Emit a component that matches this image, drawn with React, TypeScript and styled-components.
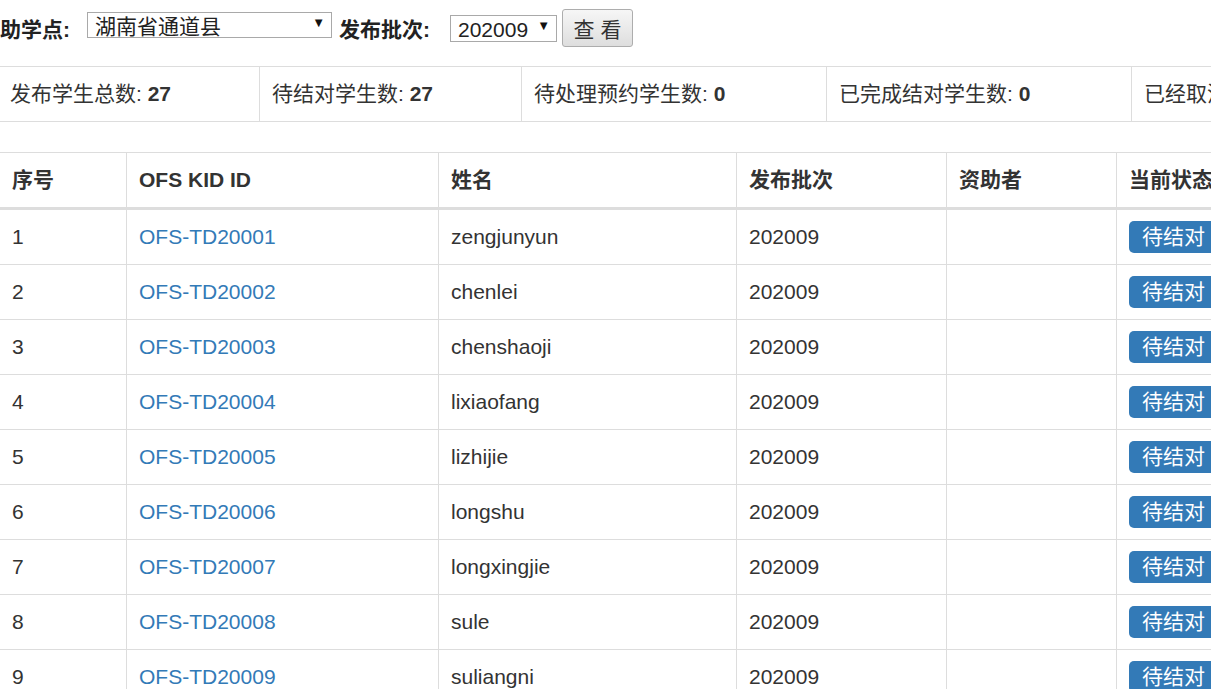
import styled, { createGlobalStyle } from 'styled-components';

const GlobalStyle = createGlobalStyle`
    html, body {
        margin: 0;
        padding: 0;
        background: #fff;
        overflow: hidden;
    }
    body {
        font-family: "Liberation Sans", "Noto Sans CJK SC", sans-serif;
        font-size: 21px;
        color: #333;
    }
`;

const rows = [
    'zengjunyun',
    'chenlei',
    'chenshaoji',
    'lixiaofang',
    'lizhijie',
    'longshu',
    'longxingjie',
    'sule',
    'suliangni',
];

const stats = [
    { label: '发布学生总数', value: '27', width: 262 },
    { label: '待结对学生数', value: '27', width: 262 },
    { label: '待处理预约学生数', value: '0', width: 305 },
    { label: '已完成结对学生数', value: '0', width: 305 },
    { label: '已经取消结对学生数', value: '0', width: 305 },
];

const columns = [
    { title: '序号', width: 127 },
    { title: 'OFS KID ID', width: 312 },
    { title: '姓名', width: 298 },
    { title: '发布批次', width: 210 },
    { title: '资助者', width: 170 },
    { title: '当前状态', width: 200 },
];

const App = () => {
    return (
        <Page>
            <GlobalStyle />
            <FilterBar>
                <FilterLabel>资助学点:</FilterLabel>
                <SelectWrap $width={ 245 } $height={ 26 } $shift={ -6 }>
                    <Select defaultValue='tongdao'>
                        <option value='tongdao'>湖南省通道县</option>
                    </Select>
                </SelectWrap>
                <FilterLabel $gapLeft={ 7 } $gapRight={ 20 }>发布批次:</FilterLabel>
                <SelectWrap $width={ 107 } $height={ 27 }>
                    <Select defaultValue='202009'>
                        <option value='202009'>202009</option>
                    </Select>
                </SelectWrap>
                <ViewBtn>查 看</ViewBtn>
            </FilterBar>

            <StatsBar>
                { stats.map((s) => (
                    <StatCell key={ s.label } $width={ s.width }>
                        { s.label }: <b>{ s.value }</b>
                    </StatCell>
                )) }
            </StatsBar>

            <Table>
                <colgroup>
                    { columns.map((c) => <Col key={ c.title } $width={ c.width } />) }
                </colgroup>
                <thead>
                    <tr>
                        { columns.map((c) => <Th key={ c.title }>{ c.title }</Th>) }
                    </tr>
                </thead>
                <tbody>
                    { rows.map((name, i) => (
                        <tr key={ name }>
                            <Td>{ i + 1 }</Td>
                            <Td><KidLink href='#'>OFS-TD2000{ i + 1 }</KidLink></Td>
                            <Td>{ name }</Td>
                            <Td>202009</Td>
                            <Td></Td>
                            <Td><StatusLabel>待结对</StatusLabel></Td>
                        </tr>
                    )) }
                </tbody>
            </Table>
        </Page>
    );
};

const Page = styled.div`
    width: 1400px;
    margin-left: -3px;
`;

const FilterBar = styled.div`
    display: flex;
    align-items: center;
    height: 38px;
    padding-top: 9px;
    margin-left: -18px;
`;

const FilterLabel = styled.label<{ $gapLeft?: number; $gapRight?: number }>`
    font-weight: bold;
    color: #222;
    font-size: 21px;
    margin-left: ${ (p) => p.$gapLeft || 0 }px;
    margin-right: ${ (p) => p.$gapRight || 17 }px;
`;

const SelectWrap = styled.div<{ $width: number; $height: number; $shift?: number }>`
    position: relative;
    width: ${ (p) => p.$width }px;
    height: ${ (p) => p.$height }px;
    margin-top: ${ (p) => p.$shift || 0 }px;

    &::after {
        content: '▼';
        position: absolute;
        right: 7px;
        top: 3px;
        font-size: 13px;
        color: #111;
        pointer-events: none;
    }
`;

const Select = styled.select`
    appearance: none;
    width: 100%;
    height: 100%;
    box-sizing: border-box;
    border: 1px solid #a9a9a9;
    border-radius: 0;
    background: #fff;
    padding: 2px 24px 0 7px;
    font-family: "Liberation Sans", "Noto Sans CJK SC", sans-serif;
    font-size: 21px;
    line-height: 24px;
    color: #222;
    outline: none;
`;

const ViewBtn = styled.button`
    margin-left: 5px;
    width: 71px;
    height: 38px;
    box-sizing: border-box;
    border: 1px solid #adadad;
    border-radius: 3px;
    background: linear-gradient(#f6f6f6, #dedede);
    font-family: "Liberation Sans", "Noto Sans CJK SC", sans-serif;
    font-size: 21px;
    color: #333;
    padding: 0;
`;

const StatsBar = styled.div`
    display: flex;
    margin-top: 19px;
    border-top: 1px solid #ddd;
    border-bottom: 1px solid #ddd;
    height: 54px;
`;

const StatCell = styled.div<{ $width: number }>`
    flex: 0 0 ${ (p) => p.$width }px;
    box-sizing: border-box;
    padding-left: 12px;
    line-height: 54px;
    border-left: 1px solid #ddd;
    white-space: nowrap;
    overflow: hidden;
    color: #333;

    b {
        font-weight: bold;
    }
`;

const Table = styled.table`
    margin-top: 30px;
    margin-left: 2px;
    border-collapse: collapse;
    table-layout: fixed;
    width: 1317px;
`;

const Col = styled.col<{ $width: number }>`
    width: ${ (p) => p.$width }px;
`;

const Th = styled.th`
    text-align: left;
    font-weight: bold;
    color: #333;
    padding: 12px;
    line-height: 30px;
    border: 1px solid #ddd;
    border-bottom: 3px solid #ddd;
    white-space: nowrap;
    overflow: hidden;
`;

const Td = styled.td`
    padding: 12px;
    height: 30px;
    line-height: 30px;
    border: 1px solid #ddd;
    color: #333;
    white-space: nowrap;
    vertical-align: top;
`;

const KidLink = styled.a`
    color: #337ab7;
    text-decoration: none;
`;

const StatusLabel = styled.span`
    display: inline-block;
    height: 32px;
    background: #337ab7;
    color: #fff;
    font-size: 21px;
    line-height: 32px;
    margin: -1px 0;
    padding: 0 13px;
    border-radius: 5px;
    vertical-align: top;
`;

export default App;
